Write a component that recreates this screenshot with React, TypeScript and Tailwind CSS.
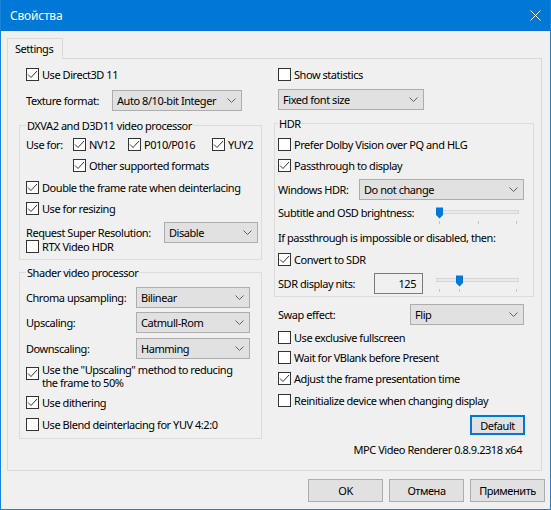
import React from "react";

// Win10 style property sheet: MPC Video Renderer settings

function Box({ on }: { on?: boolean }) {
  return (
    <span className="w-[13px] h-[13px] shrink-0 border border-[#333333] bg-white flex items-center justify-center">
      {on && (
        <svg width="11" height="11" viewBox="0 0 11 11">
          <path d="M1 5.5L4 8.5L10 2" fill="none" stroke="#333333" strokeWidth="1" />
        </svg>
      )}
    </span>
  );
}

function Check({ label, on, className = "" }: { label: string; on?: boolean; className?: string }) {
  return (
    <div className={`flex items-center h-[17px] ${className}`}>
      <Box on={on} />
      <span className="ml-[3px] whitespace-nowrap">{label}</span>
    </div>
  );
}

function Combo({ value, className = "" }: { value: string; className?: string }) {
  return (
    <div className={`h-[21px] shrink-0 flex items-center justify-between border border-[#adadad] bg-[#e1e1e1] pl-[4px] pr-[5px] ${className}`}>
      <span className="whitespace-nowrap">{value}</span>
      <svg width="9" height="5" viewBox="0 0 9 5">
        <path d="M0.5 0.5L4.5 4.5L8.5 0.5" fill="none" stroke="#606060" />
      </svg>
    </div>
  );
}

function Group({ title, className = "", children }: { title: string; className?: string; children: React.ReactNode }) {
  return (
    <fieldset className={`border border-[#dcdcdc] ${className}`}>
      <legend className="px-[1px] leading-[15px]">{title}</legend>
      {children}
    </fieldset>
  );
}

function Slider({ pos, ticks, className = "" }: { pos: number; ticks: number[]; className?: string }) {
  return (
    <svg width="88" height="20" viewBox="0 0 88 20" className={`shrink-0 ${className}`}>
      <rect x="3.5" y="4.5" width="82" height="3" fill="#e7eaea" stroke="#d6d6d6" />
      {ticks.map((t) => (
        <line key={t} x1={t + 0.5} y1="15" x2={t + 0.5} y2="18" stroke="#c4c4c4" />
      ))}
      <path d={`M${pos - 3} 1.5 H${pos + 4} V9 L${pos + 0.5} 12.5 L${pos - 3} 9 Z`} fill="#0078d7" />
    </svg>
  );
}

function Btn({ label }: { label: string }) {
  return (
    <div className="w-[75px] h-[23px] flex items-center justify-center border border-[#adadad] bg-[#e1e1e1]">
      {label}
    </div>
  );
}

export default function App() {
  return (
    <div className="w-[551px] h-[510px] flex flex-col bg-[#f0f0f0] border-x border-b border-[#1883d7] text-[11px] leading-[17px] tracking-[-0.45px] text-black font-['Noto_Sans',sans-serif] overflow-hidden select-none">
      {/* title bar */}
      <div className="h-[31px] shrink-0 bg-[#0078d7] flex items-center justify-between pl-[9px] pr-[9px] text-white text-[12px] tracking-[-0.2px]">
        <span>Свойства</span>
        <svg width="11" height="11" viewBox="0 0 11 11">
          <path d="M0.5 0.5L10.5 10.5M10.5 0.5L0.5 10.5" stroke="#ffffff" strokeWidth="1" />
        </svg>
      </div>

      <div className="pl-[6px] pr-[8px] pt-[7px]">
        {/* tab strip */}
        <div className="flex h-[21px]">
          <div className="w-[56px] border-t border-x border-[#d9d9d9] pl-[7px] leading-[19px]">Settings</div>
          <div className="flex-1 border-b border-[#d9d9d9]" />
        </div>

        {/* tab page */}
        <div className="h-[412px] flex border-x border-b border-[#d9d9d9] pl-[11px] pr-[7px]">
          {/* left column */}
          <div className="w-[243px] flex flex-col">
            <Check label="Use Direct3D 11" on className="ml-[7px] mt-[7px]" />
            <div className="flex items-center h-[21px] mt-[7px] ml-[7px]">
              <span className="w-[86px] shrink-0">Texture format:</span>
              <Combo value="Auto 8/10-bit Integer" className="w-[130px]" />
            </div>

            <Group title="DXVA2 and D3D11 video processor" className="mt-[7px] pl-[6px] pb-[4px]">
              <div className="flex flex-col">
                <div className="flex items-center h-[17px] mt-[3px]">
                  <span className="w-[47px] shrink-0">Use for:</span>
                  <Check label="NV12" on className="w-[55px]" />
                  <Check label="P010/P016" on className="w-[84px]" />
                  <Check label="YUY2" on />
                </div>
                <Check label="Other supported formats" on className="ml-[47px] mt-[4px]" />
                <Check label="Double the frame rate when deinterlacing" on className="mt-[5px]" />
                <Check label="Use for resizing" on className="mt-[4px]" />
                <div className="flex items-center h-[21px] mt-[5px]">
                  <span className="w-[138px] shrink-0">Request Super Resolution:</span>
                  <Combo value="Disable" className="w-[94px]" />
                </div>
                <Check label="RTX Video HDR" className="mt-[-5px]" />
              </div>
            </Group>

            <Group title="Shader video processor" className="mt-[5px] pl-[6px] pb-[5px]">
              <div className="flex flex-col">
                <div className="flex items-center h-[21px] mt-[7px]">
                  <span className="w-[110px] shrink-0">Chroma upsampling:</span>
                  <Combo value="Bilinear" className="w-[114px]" />
                </div>
                <div className="flex items-center h-[21px] mt-[4px]">
                  <span className="w-[110px] shrink-0">Upscaling:</span>
                  <Combo value="Catmull-Rom" className="w-[114px]" />
                </div>
                <div className="flex items-center h-[21px] mt-[5px]">
                  <span className="w-[110px] shrink-0">Downscaling:</span>
                  <Combo value="Hamming" className="w-[114px]" />
                </div>
                <div className="flex items-start mt-[4px]">
                  <span className="mt-[4px]">
                    <Box on />
                  </span>
                  <div className="ml-[3px] flex flex-col">
                    <span className="h-[13px] leading-[13px] whitespace-nowrap">Use the &quot;Upscaling&quot; method to reducing</span>
                    <span className="h-[13px] leading-[13px] whitespace-nowrap">the frame to 50%</span>
                  </div>
                </div>
                <Check label="Use dithering" on className="mt-[5px]" />
                <Check label="Use Blend deinterlacing for YUV 4:2:0" className="mt-[5px]" />
              </div>
            </Group>
          </div>

          {/* right column */}
          <div className="w-[260px] ml-[12px] flex flex-col">
            <Check label="Show statistics" className="ml-[4px] mt-[7px]" />
            <Combo value="Fixed font size" className="w-[146px] ml-[4px] mt-[6px]" />

            <Group title="HDR" className="mt-[6px] pl-[3px] pb-[2px]">
              <div className="flex flex-col">
                <Check label="Prefer Dolby Vision over PQ and HLG" className="mt-[5px]" />
                <Check label="Passthrough to display" on className="mt-[4px]" />
                <div className="flex items-center h-[21px] mt-[5px]">
                  <span className="w-[81px] shrink-0">Windows HDR:</span>
                  <Combo value="Do not change" className="w-[165px]" />
                </div>
                <div className="flex items-start h-[22px] mt-[4px]">
                  <span className="w-[155px] shrink-0">Subtitle and OSD brightness:</span>
                  <Slider pos={6} ticks={[6, 45, 83]} className="mt-[2px]" />
                </div>
                <div className="h-[17px] mt-[3px] whitespace-nowrap">If passthrough is impossible or disabled, then:</div>
                <Check label="Convert to SDR" on className="mt-[5px]" />
                <div className="flex items-start h-[21px] mt-[5px]">
                  <span className="w-[96px] shrink-0 leading-[21px]">SDR display nits:</span>
                  <div className="w-[49px] h-[21px] shrink-0 border border-[#7a7a7a] text-right pr-[6px] leading-[19px]">125</div>
                  <Slider pos={26} ticks={[6, 26, 83]} className="ml-[10px] mt-[1px]" />
                </div>
              </div>
            </Group>

            <div className="flex items-center h-[21px] mt-[7px] ml-[4px]">
              <span className="w-[132px] shrink-0">Swap effect:</span>
              <Combo value="Flip" className="w-[114px]" />
            </div>
            <Check label="Use exclusive fullscreen" className="ml-[4px] mt-[4px]" />
            <Check label="Wait for VBlank before Present" className="ml-[4px] mt-[3px]" />
            <Check label="Adjust the frame presentation time" on className="ml-[4px] mt-[4px]" />
            <Check label="Reinitialize device when changing display" className="ml-[4px] mt-[5px]" />
            <div className="self-end mr-[9px] mt-[6px] w-[55px] h-[20px] flex items-center justify-center border-2 border-[#0078d7] bg-[#e1e1e1]">
              Default
            </div>
            <div className="h-[17px] mt-[6px] text-right pr-[12px]">MPC Video Renderer 0.8.9.2318 x64</div>
          </div>
        </div>
      </div>

      {/* dialog buttons */}
      <div className="flex justify-end gap-[6px] mt-[8px] pr-[5px]">
        <Btn label="OK" />
        <Btn label="Отмена" />
        <Btn label="Применить" />
      </div>
    </div>
  );
}
